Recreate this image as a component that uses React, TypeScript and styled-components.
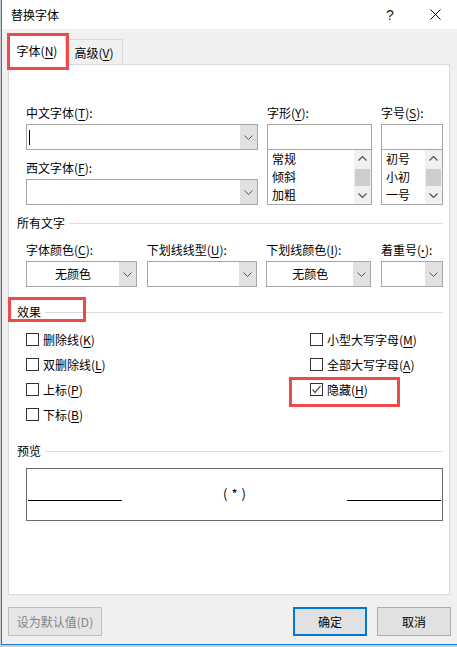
import React from 'react';
import styled, { createGlobalStyle } from 'styled-components';

const Global = createGlobalStyle`
  html, body { margin: 0; padding: 0; background: #c9ccd0; }
  body {
    font-family: "Noto Sans CJK SC", "Microsoft YaHei", sans-serif;
    font-size: 12px;
    color: #000;
  }
  #root { width: 457px; height: 647px; overflow: hidden; }
  u { text-decoration-thickness: 1px; text-underline-offset: 2px; }
`;

const Window = styled.div`
  margin-left: 1px;
  width: 456px;
  height: 645px;
  box-sizing: border-box;
  border-left: 1px solid #1b7bd0;
  border-bottom: 1px solid #1b7bd0;
  background: #f0f0f0;
  display: flex;
  flex-direction: column;
`;

const TitleBar = styled.div`
  height: 29px;
  background: #fff;
  display: flex;
  align-items: center;
  padding-left: 9px;
`;

const Title = styled.span`
  flex: 1;
  font-size: 12px;
  line-height: 16px;
`;

const CaptionBtn = styled.div<{ $w: number }>`
  width: ${(p) => p.$w}px;
  height: 100%;
  display: flex;
  align-items: center;
  justify-content: center;
  font-family: "Liberation Sans", sans-serif;
  font-size: 14px;
  color: #222;
`;

const TabStrip = styled.div`
  height: 35px;
  display: flex;
  align-items: flex-end;
  padding-left: 6px;
`;

const Tab = styled.div<{ $active?: boolean }>`
  position: relative;
  box-sizing: border-box;
  height: ${(p) => (p.$active ? 32 : 25)}px;
  width: ${(p) => (p.$active ? 58 : 57)}px;
  margin-bottom: ${(p) => (p.$active ? -1 : 0)}px;
  z-index: ${(p) => (p.$active ? 2 : 0)};
  background: ${(p) => (p.$active ? '#fff' : '#f0f0f0')};
  border: 1px solid #d9d9d9;
  border-bottom: none;
  ${(p) => (p.$active ? '' : 'border-left: none;')}
  display: flex;
  align-items: center;
  justify-content: center;
  padding-top: ${(p) => (p.$active ? 3 : 2)}px;
  line-height: 16px;
  white-space: nowrap;
`;

const RedBox = styled.div<{ $l: number; $t: number; $w: number; $h: number }>`
  position: absolute;
  left: ${(p) => p.$l}px;
  top: ${(p) => p.$t}px;
  width: ${(p) => p.$w}px;
  height: ${(p) => p.$h}px;
  box-sizing: border-box;
  border: 3px solid #ef4a4a;
  pointer-events: none;
  z-index: 3;
`;

const Panel = styled.div`
  position: relative;
  z-index: 1;
  margin: 0 7px 0 6px;
  height: 531px;
  box-sizing: border-box;
  background: #fff;
  border: 1px solid #d9d9d9;
  padding: 40px 6px 0 8px;
  display: flex;
  flex-direction: column;
`;

const Block = styled.div`
  margin-left: 9px;
`;

const FontGrid = styled(Block)`
  display: grid;
  grid-template-columns: 232px 105px 62px;
  column-gap: 9px;
`;

const Col = styled.div`
  display: flex;
  flex-direction: column;
`;

const Label = styled.div<{ $mt?: number }>`
  height: 16px;
  line-height: 16px;
  margin-top: ${(p) => p.$mt ?? 0}px;
  margin-bottom: 3px;
  white-space: nowrap;
`;

const Dot = styled.span`
  font-family: "Liberation Sans", sans-serif;
  font-weight: bold;
`;

const ComboBox = styled.div`
  height: 26px;
  box-sizing: border-box;
  border: 1px solid #a6a6a6;
  background: #fff;
  display: flex;
`;

const ComboField = styled.div<{ $center?: boolean }>`
  flex: 1;
  display: flex;
  align-items: center;
  justify-content: ${(p) => (p.$center ? 'center' : 'flex-start')};
  padding-left: ${(p) => (p.$center ? 0 : 2)}px;
  line-height: 16px;
`;

const Caret = styled.div`
  width: 1px;
  height: 15px;
  background: #000;
`;

const DropBtn = styled.div`
  width: 17px;
  background: #e1e1e1;
  display: flex;
  align-items: center;
  justify-content: center;
`;

const TextBox = styled.div`
  height: 25px;
  box-sizing: border-box;
  border: 1px solid #a6a6a6;
  border-bottom: none;
  background: #fff;
`;

const ListBox = styled.div`
  height: 56px;
  box-sizing: border-box;
  border: 1px solid #a6a6a6;
  display: flex;
`;

const ListItems = styled.div`
  flex: 1;
  padding-left: 4px;
  display: flex;
  flex-direction: column;
`;

const ListItem = styled.div`
  height: 18px;
  line-height: 18px;
  white-space: nowrap;
`;

const ScrollBar = styled.div`
  width: 17px;
  background: #f0f0f0;
  display: flex;
  flex-direction: column;
`;

const ScrollBtn = styled.div`
  height: 17px;
  display: flex;
  align-items: center;
  justify-content: center;
`;

const ScrollTrack = styled.div`
  flex: 1;
  padding: 2px 1px 1px 1px;
  display: flex;
`;

const Thumb = styled.div`
  flex: 1;
  background: #cdcdcd;
`;

const SectionHeader = styled.div<{ $mt: number }>`
  position: relative;
  margin-top: ${(p) => p.$mt}px;
  height: 16px;
  line-height: 16px;
  display: flex;
  align-items: center;
  gap: 4px;
  white-space: nowrap;
  &::after {
    content: '';
    flex: 1;
    height: 1px;
    background: #dcdcdc;
  }
`;

const AllTextGrid = styled(Block)`
  margin-top: 11px;
  display: grid;
  grid-template-columns: 111px 110px 105px 62px;
  justify-content: space-between;
`;

const EffectsGrid = styled(Block)`
  margin-top: 7px;
  display: grid;
  grid-template-columns: 1fr 133px;
  grid-auto-rows: 25px;
`;

const CheckItem = styled.div`
  position: relative;
  display: flex;
  align-items: center;
  gap: 4px;
  line-height: 16px;
  white-space: nowrap;
`;

const Box = styled.div`
  width: 13px;
  height: 13px;
  box-sizing: border-box;
  border: 1px solid #333;
  background: #fff;
  display: flex;
  align-items: center;
  justify-content: center;
`;

const PreviewBox = styled(Block)`
  margin-top: 9px;
  height: 53px;
  box-sizing: border-box;
  border: 1px solid #6a6a6a;
  display: grid;
  grid-template-columns: 94px 1fr 94px;
  align-items: center;
  padding: 0 1px;
`;

const PreviewLine = styled.div`
  height: 1px;
  background: #000;
  margin-top: 11px;
`;

const PreviewText = styled.div`
  text-align: center;
  font-size: 13px;
  letter-spacing: 4px;
  padding-left: 4px;
  line-height: 16px;
  margin-top: -1px;
`;

const Footer = styled.div`
  margin-top: 12px;
  display: flex;
  padding: 0 6px;
  gap: 10px;
`;

const Button = styled.div<{ $w: number; $primary?: boolean; $disabled?: boolean }>`
  width: ${(p) => p.$w}px;
  height: 29px;
  box-sizing: border-box;
  background: ${(p) => (p.$disabled ? '#e6e6e6' : '#e1e1e1')};
  border: ${(p) => (p.$primary ? '2px solid #0078d7' : p.$disabled ? '1px solid #bfbfbf' : '1px solid #adadad')};
  color: ${(p) => (p.$disabled ? '#838383' : '#000')};
  display: flex;
  align-items: center;
  justify-content: center;
  line-height: 16px;
  white-space: nowrap;
`;

const Spacer = styled.div`
  flex: 1;
`;

const ChevronDown = () => (
  <svg width="9" height="5" viewBox="0 0 9 5">
    <polyline points="0.5,0.5 4.5,4.5 8.5,0.5" fill="none" stroke="#555" strokeWidth="1" />
  </svg>
);

const ChevronUp = () => (
  <svg width="9" height="5" viewBox="0 0 9 5">
    <polyline points="0.5,4.5 4.5,0.5 8.5,4.5" fill="none" stroke="#555" strokeWidth="1.2" />
  </svg>
);

const SmallDown = () => (
  <svg width="9" height="5" viewBox="0 0 9 5">
    <polyline points="0.5,0.5 4.5,4.5 8.5,0.5" fill="none" stroke="#555" strokeWidth="1.2" />
  </svg>
);

const CloseIcon = () => (
  <svg width="11" height="11" viewBox="0 0 11 11">
    <line x1="0.5" y1="0.5" x2="10.5" y2="10.5" stroke="#000" strokeWidth="1" />
    <line x1="10.5" y1="0.5" x2="0.5" y2="10.5" stroke="#000" strokeWidth="1" />
  </svg>
);

const CheckMark = () => (
  <svg width="11" height="11" viewBox="0 0 11 11">
    <polyline points="1.5,5.5 4,8.5 9.5,2" fill="none" stroke="#555" strokeWidth="1.2" />
  </svg>
);

const Combo: React.FC<{ text?: string; caret?: boolean }> = ({ text, caret }) => (
  <ComboBox>
    <ComboField $center={!!text}>
      {caret ? <Caret /> : text}
    </ComboField>
    <DropBtn>
      <ChevronDown />
    </DropBtn>
  </ComboBox>
);

const List: React.FC<{ items: string[] }> = ({ items }) => (
  <ListBox>
    <ListItems>
      {items.map((i) => (
        <ListItem key={i}>{i}</ListItem>
      ))}
    </ListItems>
    <ScrollBar>
      <ScrollBtn>
        <ChevronUp />
      </ScrollBtn>
      <ScrollTrack>
        <Thumb />
      </ScrollTrack>
      <ScrollBtn>
        <SmallDown />
      </ScrollBtn>
    </ScrollBar>
  </ListBox>
);

const Check: React.FC<{ label: string; k: string; checked?: boolean; children?: React.ReactNode }> = ({
  label,
  k,
  checked,
  children,
}) => (
  <CheckItem>
    <Box>{checked && <CheckMark />}</Box>
    <span>
      {label}(<u>{k}</u>)
    </span>
    {children}
  </CheckItem>
);

export default function App() {
  return (
    <>
      <Global />
      <Window>
        <TitleBar>
          <Title>替换字体</Title>
          <CaptionBtn $w={46}>?</CaptionBtn>
          <CaptionBtn $w={44}>
            <CloseIcon />
          </CaptionBtn>
        </TitleBar>
        <TabStrip>
          <Tab $active>
            <span>
              字体(<u>N</u>)
            </span>
            <RedBox $l={-2} $t={-1} $w={62} $h={37} />
          </Tab>
          <Tab>
            <span>
              高级(<u>V</u>)
            </span>
          </Tab>
        </TabStrip>
        <Panel>
          <FontGrid>
            <Col>
              <Label>
                中文字体(<u>T</u>):
              </Label>
              <Combo caret />
              <Label $mt={10}>
                西文字体(<u>F</u>):
              </Label>
              <Combo />
            </Col>
            <Col>
              <Label>
                字形(<u>Y</u>):
              </Label>
              <TextBox />
              <List items={['常规', '倾斜', '加粗']} />
            </Col>
            <Col>
              <Label>
                字号(<u>S</u>):
              </Label>
              <TextBox />
              <List items={['初号', '小初', '一号']} />
            </Col>
          </FontGrid>

          <SectionHeader $mt={10}>所有文字</SectionHeader>
          <AllTextGrid>
            <Col>
              <Label>
                字体颜色(<u>C</u>):
              </Label>
              <Combo text="无颜色" />
            </Col>
            <Col>
              <Label>
                下划线线型(<u>U</u>):
              </Label>
              <Combo />
            </Col>
            <Col>
              <Label>
                下划线颜色(<u>I</u>):
              </Label>
              <Combo text="无颜色" />
            </Col>
            <Col>
              <Label>
                着重号(<u><Dot>·</Dot></u>):
              </Label>
              <Combo />
            </Col>
          </AllTextGrid>

          <SectionHeader $mt={17}>
            效果
            <RedBox $l={-9} $t={-7} $w={78} $h={25} />
          </SectionHeader>
          <EffectsGrid>
            <Check label="删除线" k="K" />
            <Check label="小型大写字母" k="M" />
            <Check label="双删除线" k="L" />
            <Check label="全部大写字母" k="A" />
            <Check label="上标" k="P" />
            <Check label="隐藏" k="H" checked>
              <RedBox $l={-21} $t={0} $w={111} $h={30} />
            </Check>
            <Check label="下标" k="B" />
          </EffectsGrid>

          <SectionHeader $mt={16}>预览</SectionHeader>
          <PreviewBox>
            <PreviewLine />
            <PreviewText>(*)</PreviewText>
            <PreviewLine />
          </PreviewBox>
        </Panel>
        <Footer>
          <Button $w={94} $disabled>
            设为默认值(D)
          </Button>
          <Spacer />
          <Button $w={74} $primary>
            确定
          </Button>
          <Button $w={74}>取消</Button>
        </Footer>
      </Window>
    </>
  );
}
